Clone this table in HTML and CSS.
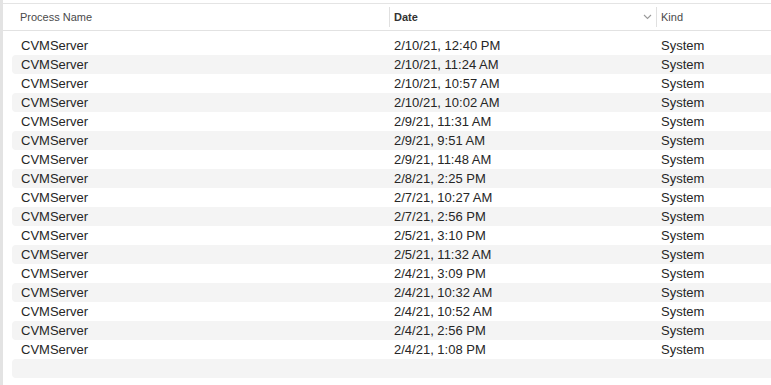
FILE: index.html
```html
<!DOCTYPE html>
<html>
<head>
<meta charset="utf-8">
<link rel="stylesheet" href="styles.css">
</head>
<body>
<div class="window">
  <div class="edge"></div>
  <div class="table">
    <div class="header">
      <div class="hcell c-name">Process Name</div>
      <div class="hcell c-date sorted"><span>Date</span>
        <svg class="chev" width="9" height="6" viewBox="0 0 9 6"><path d="M1 1 L4.5 4.5 L8 1" fill="none" stroke="#9a9a9a" stroke-width="1.1"/></svg>
      </div>
      <div class="hcell c-kind">Kind</div>
    </div>
    <div class="rows">
      <div class="row"><div class="c-name">CVMServer</div><div class="c-date">2/10/21, 12:40 PM</div><div class="c-kind">System</div></div>
      <div class="row"><div class="c-name">CVMServer</div><div class="c-date">2/10/21, 11:24 AM</div><div class="c-kind">System</div></div>
      <div class="row"><div class="c-name">CVMServer</div><div class="c-date">2/10/21, 10:57 AM</div><div class="c-kind">System</div></div>
      <div class="row"><div class="c-name">CVMServer</div><div class="c-date">2/10/21, 10:02 AM</div><div class="c-kind">System</div></div>
      <div class="row"><div class="c-name">CVMServer</div><div class="c-date">2/9/21, 11:31 AM</div><div class="c-kind">System</div></div>
      <div class="row"><div class="c-name">CVMServer</div><div class="c-date">2/9/21, 9:51 AM</div><div class="c-kind">System</div></div>
      <div class="row"><div class="c-name">CVMServer</div><div class="c-date">2/9/21, 11:48 AM</div><div class="c-kind">System</div></div>
      <div class="row"><div class="c-name">CVMServer</div><div class="c-date">2/8/21, 2:25 PM</div><div class="c-kind">System</div></div>
      <div class="row"><div class="c-name">CVMServer</div><div class="c-date">2/7/21, 10:27 AM</div><div class="c-kind">System</div></div>
      <div class="row"><div class="c-name">CVMServer</div><div class="c-date">2/7/21, 2:56 PM</div><div class="c-kind">System</div></div>
      <div class="row"><div class="c-name">CVMServer</div><div class="c-date">2/5/21, 3:10 PM</div><div class="c-kind">System</div></div>
      <div class="row"><div class="c-name">CVMServer</div><div class="c-date">2/5/21, 11:32 AM</div><div class="c-kind">System</div></div>
      <div class="row"><div class="c-name">CVMServer</div><div class="c-date">2/4/21, 3:09 PM</div><div class="c-kind">System</div></div>
      <div class="row"><div class="c-name">CVMServer</div><div class="c-date">2/4/21, 10:32 AM</div><div class="c-kind">System</div></div>
      <div class="row"><div class="c-name">CVMServer</div><div class="c-date">2/4/21, 10:52 AM</div><div class="c-kind">System</div></div>
      <div class="row"><div class="c-name">CVMServer</div><div class="c-date">2/4/21, 2:56 PM</div><div class="c-kind">System</div></div>
      <div class="row"><div class="c-name">CVMServer</div><div class="c-date">2/4/21, 1:08 PM</div><div class="c-kind">System</div></div>
      <div class="row"></div>
    </div>
  </div>
</div>
</body>
</html>
```

FILE: styles.css
```css
* { box-sizing: border-box; }
html, body {
  margin: 0;
  padding: 0;
  background: #ffffff;
}
body {
  width: 771px;
  height: 385px;
  overflow: hidden;
  font-family: "Liberation Sans", Arial, sans-serif;
  color: #262626;
}
.window {
  display: flex;
  height: 385px;
}
.edge {
  width: 3px;
  background: #e3e3e3;
  flex: none;
}
.table {
  flex: 1;
  display: flex;
  flex-direction: column;
}
.header {
  height: 28px;
  margin-top: 3px;
  border-top: 1px solid #e4e4e4;
  border-bottom: 1px solid #e2e2e2;
  display: flex;
  align-items: center;
  font-size: 11px;
  color: #4a4a4a;
}
.hcell {
  height: 20px;
  display: flex;
  align-items: center;
}
.header .c-name { padding-left: 17px; width: 386px; }
.header .c-date {
  width: 267px;
  border-left: 1px solid #e0e0e0;
  padding-left: 4px;
  padding-right: 4px;
  justify-content: space-between;
  font-weight: bold;
  color: #333;
}
.chev { display: block; }
.header .c-kind {
  border-left: 1px solid #e0e0e0;
  padding-left: 4px;
}
.rows {
  padding-top: 5px;
  display: flex;
  flex-direction: column;
}
.row {
  height: 19px;
  margin-left: 9px;
  display: flex;
  align-items: center;
  font-size: 13px;
  border-radius: 4px 0 0 4px;
}
.row:nth-child(even) { background: #f4f4f4; }
.row .c-name { width: 382px; padding-left: 9px; }
.row .c-date { width: 267px; }
```
